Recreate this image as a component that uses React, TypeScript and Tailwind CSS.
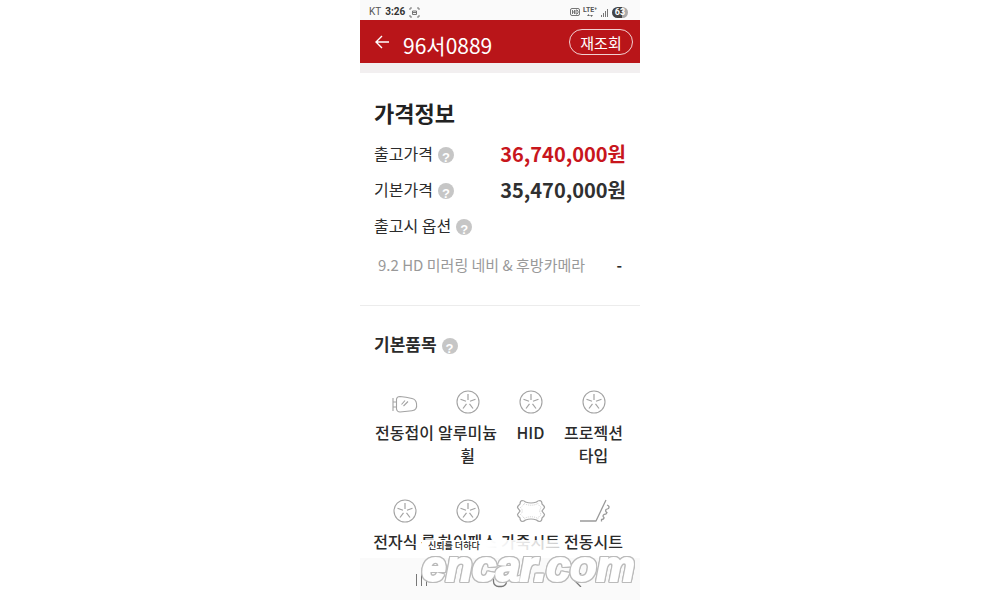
import React from 'react';

interface PriceRow {
  label: string;
  value?: string;
  valueClass?: string;
}

interface Feature {
  name: string;
  icon: React.FC;
}

const priceRows: PriceRow[] = [
  { label: '출고가격', value: '36,740,000원', valueClass: 'text-[#c8161d]' },
  { label: '기본가격', value: '35,470,000원', valueClass: 'text-[#303030]' },
  { label: '출고시 옵션' },
];

const MirrorIcon: React.FC = () => (
  <svg width="28" height="24" viewBox="0 0 28 24" fill="none" stroke="#a3a3a3" strokeWidth="1.1" strokeLinejoin="round" aria-hidden="true">
    <path d="M2 8v13M2 12h3.500M2 17h3.500" />
    <path d="M5.500 9Q6 6.500 9 6.500Q15 7 21 8.500Q25 9.500 25.500 13.500Q26 17 25 18.500Q24 20.500 21 20.800L9 22Q6 22 5.500 19Z" />
    <path d="M10.500 14.500l3.500-4M12.500 16l4.500-4.500" />
  </svg>
);

const WheelIcon: React.FC = () => (
  <svg width="24" height="24" viewBox="0 0 24 24" fill="none" stroke="#a3a3a3" strokeWidth="1.1" aria-hidden="true">
    <circle cx="12" cy="12" r="11" />
    <path d="M12 4v6M4.500 9.200l5.500 2M19.500 9.200l-5.500 2M7 18.500l3.500-4.700M17 18.500l-3.500-4.700" strokeWidth="1.200" />
  </svg>
);

const LeatherIcon: React.FC = () => (
  <svg width="30" height="24" viewBox="0 0 30 24" fill="none" aria-hidden="true">
    <path
      d="M6 1.500Q8 1.500 9.500 3Q15 5 20.500 3Q22 1.500 24 1.500Q26 2 26 5Q28.500 7 28.500 8.500L26 12L28.500 15.500Q28.500 17 26 19Q26 22 24 22.500Q22 22.500 20.500 21Q15 19 9.500 21Q8 22.500 6 22.500Q4 22 4 19Q1.500 17 1.500 15.500L4 12L1.500 8.500Q1.500 7 4 5Q4 2 6 1.500Z"
      stroke="#a3a3a3"
      strokeWidth="1.200"
    />
    <path
      d="M8 4.500Q15 8 22 4.500Q23 7 25.500 8.500Q22 12 25.500 15.500Q23 17 22 19.500Q15 16 8 19.500Q7 17 4.500 15.500Q8 12 4.500 8.500Q7 7 8 4.500Z"
      stroke="#c4c4c4"
      strokeWidth="0.800"
      strokeDasharray="1 1"
    />
  </svg>
);

const SeatIcon: React.FC = () => (
  <svg width="32" height="24" viewBox="0 0 32 24" fill="none" stroke="#9a9a9a" strokeWidth="1.300" strokeLinejoin="round" aria-hidden="true">
    <path d="M2 22H18L28 1" />
    <path d="M29 6q3 1 1.500 3.500l-2.500 1q-1 2 1 3q-.5 2-3 2q-2 1.500 0 3q0 2-2.500 2v2" />
  </svg>
);

const features: Feature[] = [
  { name: '전동접이', icon: MirrorIcon },
  { name: '알루미늄 휠', icon: WheelIcon },
  { name: 'HID', icon: WheelIcon },
  { name: '프로젝션 타입', icon: WheelIcon },
  { name: '전자식 룸', icon: WheelIcon },
  { name: '하이패스', icon: WheelIcon },
  { name: '가죽시트', icon: LeatherIcon },
  { name: '전동시트', icon: SeatIcon },
];

const HelpButton: React.FC<{ topic: string }> = ({ topic }) => (
  <button
    type="button"
    aria-label={`${topic} 도움말`}
    className="mt-1 flex size-4 shrink-0 items-center justify-center rounded-full bg-[#c6c6c6] pt-1.5 font-['Liberation_Sans',sans-serif] text-[13px] leading-4 font-bold text-white"
  >
    ?
  </button>
);

const StatusBar: React.FC = () => (
  <div className="flex h-5 shrink-0 items-center justify-between bg-[#fafafa] pt-1 pr-3 pl-[9px] text-[10px] leading-4 text-[#555]">
    <div className="flex items-center gap-1 font-['Roboto',sans-serif]">
      <span>KT</span>
      <span className="font-bold text-[#333]">3:26</span>
      <svg width="11" height="11" viewBox="0 0 11 11" fill="none" stroke="#777" aria-hidden="true">
        <path d="M1 3V1h2M8 1h2v2M10 8v2H8M3 10H1V8M3.500 4h4v3.500h-4zM3.500 5.500h4" />
      </svg>
    </div>
    <div className="flex items-center gap-[3px]">
      <svg width="10" height="8" viewBox="0 0 10 8" fill="none" stroke="#666" strokeWidth="0.900" aria-hidden="true">
        <rect x="0.500" y="0.500" width="9" height="7" rx="1.500" />
        <path d="M2.500 2v4M4.500 2v4M2.500 4h2M6 2v4h1l1-1V3L7 2z" />
      </svg>
      <div className="flex flex-col items-center font-['Roboto',sans-serif] text-[7px] leading-[7px] font-bold">
        <span>LTE⁺</span>
        <svg width="6" height="3" viewBox="0 0 6 3" fill="#666" aria-hidden="true">
          <path d="M0 2h3L1.500 0zM3 1h3L4.500 3z" />
        </svg>
      </div>
      <svg width="9" height="9" viewBox="0 0 9 9" stroke="#777" aria-hidden="true">
        <path d="M1.500 7v2M3.500 5v4M5.500 3v6M7.500 1v8" />
      </svg>
      <span className="flex h-[11px] w-4 items-center justify-center rounded-full bg-linear-to-r from-[#444] from-65% to-[#aaa] to-65% font-['Roboto',sans-serif] text-[9px] leading-[11px] font-bold text-white">
        63
      </span>
    </div>
  </div>
);

// White lettering with a thin grey rim, laid over the bottom of the screen
const Watermark: React.FC = () => (
  <div className="pointer-events-none absolute right-1 bottom-5 z-10 w-[214px]">
    <div className="w-[142px] bg-linear-to-r from-white from-45% to-white/75 pl-1.5 text-[9px] leading-3 font-medium text-[#222]">
      신뢰를 더하다
    </div>
    <div className="font-['Liberation_Sans',sans-serif] text-[43px] leading-7 font-bold text-white italic [-webkit-text-stroke:2px_#fff] [filter:drop-shadow(1px_0_0_#bbb)_drop-shadow(-1px_0_0_#bbb)_drop-shadow(0_1px_0_#bbb)_drop-shadow(0_-1px_0_#bbb)]">
      encar.com
    </div>
  </div>
);

const App: React.FC = () => {
  return (
    <div className="h-screen bg-white font-['Noto_Sans_CJK_KR',sans-serif] text-[#2b2b2b]">
      <div className="relative mx-auto flex h-full w-full max-w-[280px] flex-col overflow-hidden">
        <StatusBar />

        <header className="flex h-[43px] shrink-0 items-center bg-[#b91519] pr-[7px] pl-3.5 text-white">
          <button type="button" aria-label="뒤로">
            <svg width="16" height="16" viewBox="0 0 16 16" fill="none" stroke="currentColor" strokeWidth="1.400" aria-hidden="true">
              <path d="M15 8H2M8 2L2 8l6 6" />
            </svg>
          </button>
          <h1 className="mt-1.5 ml-[13px] text-[21px] leading-7">96서0889</h1>
          <button type="button" className="ml-auto h-[26px] w-16 rounded-full border border-white/80 pt-px text-[15px] leading-6">
            재조회
          </button>
        </header>
        <div className="h-2.5 shrink-0 bg-[#f2eff0]" />

        <main className="min-h-0 flex-1 overflow-hidden">
          <section className="border-b border-[#ececec] px-3.5 pt-[23px] pb-7">
            <h2 className="mb-[7px] text-[22px] leading-8 font-bold text-[#222]">가격정보</h2>
            <dl>
              {priceRows.map((row) => (
                <div key={row.label} className="flex h-9 items-center justify-between">
                  <dt className="flex items-center gap-[5px] text-[16px] leading-6">
                    {row.label}
                    <HelpButton topic={row.label} />
                  </dt>
                  {row.value && (
                    <dd className={`pt-0.5 text-[20px] leading-7 font-bold ${row.valueClass}`}>{row.value}</dd>
                  )}
                </div>
              ))}
            </dl>
            <div className="mt-2.5 flex justify-between px-1 text-[15px] leading-6">
              <span className="text-[#999]">9.2 HD 미러링 네비 &amp; 후방카메라</span>
              <span className="font-bold">-</span>
            </div>
          </section>

          <section className="pt-[26px]">
            <h2 className="mb-7 flex items-center gap-[5px] px-3.5 text-[17px] leading-6 font-bold">
              기본품목
              <HelpButton topic="기본품목" />
            </h2>
            <ul className="mr-[15px] ml-[13px] grid grid-cols-4 gap-y-[26px]">
              {features.map(({ name, icon: Icon }) => (
                <li key={name} className="flex flex-col items-center pt-1.5 text-center">
                  <Icon />
                  <span className="mt-[7px] text-[16px] leading-[23px] font-medium break-keep">{name}</span>
                </li>
              ))}
            </ul>
          </section>
        </main>

        <nav className="flex h-[42px] shrink-0 items-center justify-around bg-[#fafafa] px-6 pt-0.5 text-[#777]">
          <button type="button" aria-label="최근 앱">
            <svg width="14" height="14" viewBox="0 0 14 14" stroke="currentColor" aria-hidden="true">
              <path d="M1.500 1v12M6.500 1v12M11.500 1v12" />
            </svg>
          </button>
          <button type="button" aria-label="홈">
            <svg width="16" height="16" viewBox="0 0 16 16" fill="none" stroke="currentColor" strokeWidth="1.300" aria-hidden="true">
              <rect x="1.500" y="1.500" width="13" height="13" rx="5" />
            </svg>
          </button>
          <button type="button" aria-label="이전">
            <svg width="14" height="14" viewBox="0 0 14 14" fill="none" stroke="currentColor" strokeWidth="1.300" aria-hidden="true">
              <path d="M10 0L3 7l7 7" />
            </svg>
          </button>
        </nav>

        <Watermark />
      </div>
    </div>
  );
};

export default App;
